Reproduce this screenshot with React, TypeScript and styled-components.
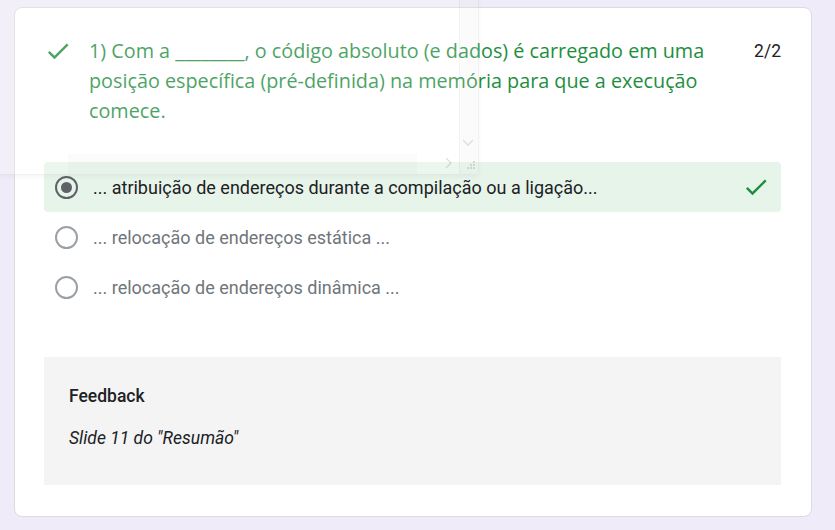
import React from "react";
import styled, { createGlobalStyle } from "styled-components";

const Global = createGlobalStyle`
  html, body { margin: 0; padding: 0; }
  body {
    background: #f0ebf8;
    font-family: Roboto, "Liberation Sans", Arial, sans-serif;
    color: #202124;
  }
`;

const Page = styled.div`
  position: relative;
  width: 835px;
  height: 530px;
  padding: 7px 0 0 14px;
  box-sizing: border-box;
  overflow: hidden;
`;

const Card = styled.div`
  width: 798px;
  height: 510px;
  box-sizing: border-box;
  background: #fff;
  border: 1px solid #dadce0;
  border-radius: 8px;
  padding: 28px 30px 0 29px;
  display: flex;
  flex-direction: column;
`;

const QuestionRow = styled.div`
  display: flex;
  align-items: flex-start;
`;

const QIcon = styled.div`
  width: 28px;
  height: 30px;
  margin-right: 17px;
  display: flex;
  align-items: center;
  color: #1e8e3e;
`;

const QText = styled.div`
  flex: 1;
  font-family: "Open Sans", Lato, sans-serif;
  font-size: 19.8px;
  line-height: 30px;
  color: #1e8e3e;
  padding-right: 10px;
`;

const Score = styled.div`
  font-size: 17.5px;
  line-height: 30px;
  color: #202124;
`;

const Options = styled.div`
  margin-top: 36px;
  display: flex;
  flex-direction: column;
`;

const Option = styled.div<{ $correct?: boolean }>`
  height: 50px;
  display: flex;
  align-items: center;
  padding: 0 11px 0 11px;
  border-radius: 4px;
  background: ${(p) => (p.$correct ? "#e6f4ea" : "transparent")};
`;

const Radio = styled.div<{ $checked?: boolean }>`
  width: 23px;
  height: 23px;
  box-sizing: border-box;
  border-radius: 50%;
  border: 2px solid ${(p) => (p.$checked ? "#5f6368" : "#9aa0a6")};
  display: flex;
  align-items: center;
  justify-content: center;
  margin-right: 15px;
  &::after {
    content: "";
    width: 11px;
    height: 11px;
    border-radius: 50%;
    background: ${(p) => (p.$checked ? "#5f6368" : "transparent")};
  }
`;

const OptionText = styled.div<{ $checked?: boolean }>`
  flex: 1;
  font-size: 18px;
  color: ${(p) => (p.$checked ? "#202124" : "#70757a")};
`;

const RowCheck = styled.div`
  color: #1e8e3e;
  display: flex;
`;

const Feedback = styled.div`
  margin-top: 45px;
  height: 128px;
  box-sizing: border-box;
  background: #f4f4f4;
  padding: 27px 25px 0 25px;
  display: flex;
  flex-direction: column;
  gap: 18px;
`;

const FeedbackTitle = styled.div`
  font-size: 17.5px;
  font-weight: 500;
  line-height: 24px;
  color: #202124;
`;

const FeedbackBody = styled.div`
  font-size: 17.5px;
  font-style: italic;
  line-height: 24px;
  color: #202124;
`;

/* faint ghost of a floating panel lying over the page */
const Ghost = styled.div`
  position: absolute;
  left: 0;
  top: 0;
  width: 478px;
  height: 174px;
  background: rgba(255, 255, 255, 0.2);
  border-right: 1px solid rgba(0, 0, 0, 0.05);
  border-bottom: 1px solid rgba(0, 0, 0, 0.05);
  box-shadow: 0 2px 4px rgba(0, 0, 0, 0.04);
  pointer-events: none;
`;

const GhostScroll = styled.div`
  position: absolute;
  right: 0;
  top: 0;
  width: 18px;
  height: 100%;
  background: rgba(0, 0, 0, 0.015);
  border-left: 1px solid rgba(0, 0, 0, 0.03);
`;

const GhostBar = styled.div`
  position: absolute;
  left: 68px;
  top: 154px;
  width: 349px;
  height: 20px;
  background: rgba(0, 0, 0, 0.015);
`;

const GhostGlyph = styled.div<{ $x: number; $y: number }>`
  position: absolute;
  left: ${(p) => p.$x}px;
  top: ${(p) => p.$y}px;
  color: rgba(0, 0, 0, 0.12);
  display: flex;
`;

const Check = ({ size = 28 }: { size?: number }) => (
  <svg width={size} height={size} viewBox="0 0 24 24" fill="currentColor">
    <path d="M9 16.17L4.83 12l-1.42 1.41L9 19 21 7l-1.41-1.41z" />
  </svg>
);

export default function App() {
  return (
    <>
      <Global />
      <Page>
        <Card>
          <QuestionRow>
            <QIcon>
              <Check />
            </QIcon>
            <QText>
              1) Com a ________, o código absoluto (e dados) é carregado em uma
              posição específica (pré-definida) na memória para que a execução
              comece.
            </QText>
            <Score>2/2</Score>
          </QuestionRow>
          <Options>
            <Option $correct>
              <Radio $checked />
              <OptionText $checked>
                ... atribuição de endereços durante a compilação ou a ligação...
              </OptionText>
              <RowCheck>
                <Check />
              </RowCheck>
            </Option>
            <Option>
              <Radio />
              <OptionText>... relocação de endereços estática ...</OptionText>
            </Option>
            <Option>
              <Radio />
              <OptionText>... relocação de endereços dinâmica ...</OptionText>
            </Option>
          </Options>
          <Feedback>
            <FeedbackTitle>Feedback</FeedbackTitle>
            <FeedbackBody>Slide 11 do "Resumão"</FeedbackBody>
          </Feedback>
        </Card>
        <Ghost>
          <GhostBar />
          <GhostScroll />
          <GhostGlyph $x={461} $y={137}>
            <svg width="14" height="10" viewBox="0 0 14 10" fill="none" stroke="currentColor" strokeWidth="1.3">
              <path d="M2 3l5 5 5-5" />
            </svg>
          </GhostGlyph>
          <GhostGlyph $x={443} $y={156}>
            <svg width="10" height="14" viewBox="0 0 10 14" fill="none" stroke="currentColor" strokeWidth="1.3">
              <path d="M3 2l5 5-5 5" />
            </svg>
          </GhostGlyph>
          <GhostGlyph $x={466} $y={160}>
            <svg width="10" height="10" viewBox="0 0 10 10" fill="currentColor">
              <rect x="7" y="1" width="2" height="2" />
              <rect x="4" y="4" width="2" height="2" />
              <rect x="7" y="4" width="2" height="2" />
              <rect x="1" y="7" width="2" height="2" />
              <rect x="4" y="7" width="2" height="2" />
              <rect x="7" y="7" width="2" height="2" />
            </svg>
          </GhostGlyph>
        </Ghost>
      </Page>
    </>
  );
}
